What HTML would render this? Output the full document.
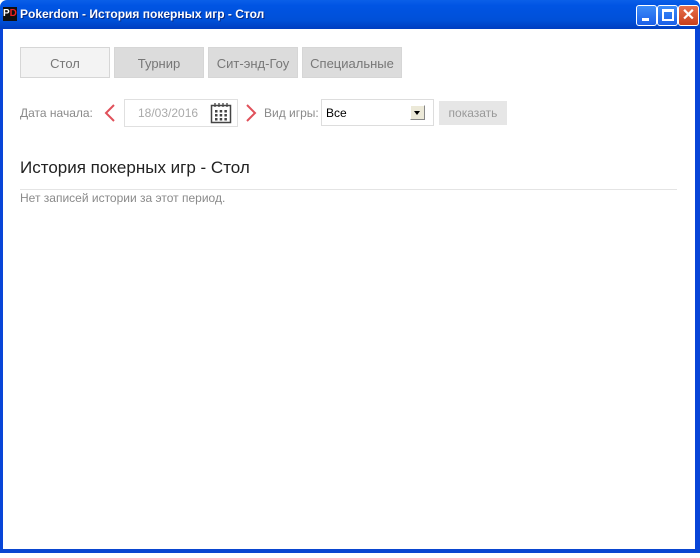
<!DOCTYPE html>
<html><head><meta charset="utf-8"><style>
*{margin:0;padding:0;box-sizing:border-box}
body{width:700px;height:558px;background:#fff;position:relative;overflow:hidden;font-family:"Liberation Sans",sans-serif}
.tb{position:absolute;left:0;top:0;width:700px;height:29px;background:linear-gradient(#0a5fe8,#0054e3 20%,#0050d8 70%,#003ec0);border-radius:7px 7px 0 0}
.tt{position:absolute;left:20px;top:7px;color:#fff;font:bold 12px "Liberation Sans",sans-serif;text-shadow:1px 1px #0a2a80}
.ic{position:absolute;left:3px;top:7px;width:14px;height:14px;background:#111;color:#fff;font:bold 10px sans-serif;line-height:14px}
.ic span{color:#e22}
.wb{position:absolute;top:5px;width:21px;height:21px;border:1px solid #fff;border-radius:3px;background:linear-gradient(#3c8cf8,#1a5ee8)}
.fr{position:absolute;left:0;top:29px;width:3px;height:524px;background:#0845d8}
.fr2{position:absolute;right:0;top:29px;width:5px;height:524px;background:#0845d8}
.fb{position:absolute;left:0;top:549px;width:700px;height:4px;background:#0a46d0}
.btn{position:absolute;top:47px;height:31px;background:#dcdcdc;color:#777;font-size:13px;text-align:center;line-height:31px;border:1px solid #d6d6d6}
.t{position:absolute;color:#8a8a8a;font-size:12px}
</style></head><body>
<div class="tb"></div>
<div class="ic">P<span>D</span></div>
<div class="tt">Pokerdom - История покерных игр - Стол</div>
<div class="wb" style="left:636px"><div style="position:absolute;left:5px;top:12px;width:7px;height:3px;background:#fff"></div></div>
<div class="wb" style="left:657px"><div style="position:absolute;left:4px;top:3px;width:12px;height:12px;border:2px solid #fff;border-top-width:3px"></div></div>
<div class="wb" style="left:678px;background:linear-gradient(#e8704c,#c8401c);color:#fff;font:bold 16px sans-serif;line-height:19px;text-align:center">✕</div>
<div class="fr"></div><div class="fr2"></div><div class="fb"></div>
<div class="btn" style="left:20px;width:90px;background:#f3f3f3">Стол</div>
<div class="btn" style="left:114px;width:90px">Турнир</div>
<div class="btn" style="left:208px;width:90px">Сит-энд-Гоу</div>
<div class="btn" style="left:302px;width:100px">Специальные</div>
<div class="t" style="left:20px;top:106px">Дата начала:</div>
<svg style="position:absolute;left:103px;top:103px" width="14" height="20"><path d="M11 2L3 10L11 18" stroke="#e0505a" stroke-width="2" fill="none"/></svg>
<div style="position:absolute;left:124px;top:99px;width:114px;height:28px;border:1px solid #e0e0e0"></div>
<div class="t" style="left:138px;top:106px;color:#aaa">18/03/2016</div>
<svg style="position:absolute;left:210px;top:102px" width="22" height="22"><rect x="1.5" y="3.5" width="19" height="17" fill="none" stroke="#444" stroke-width="1.5"/><path d="M5 1v4M9 1v4M13 1v4M17 1v4" stroke="#444" stroke-width="1.3"/><g fill="#444"><rect x="5" y="8" width="2.5" height="2.5"/><rect x="9.7" y="8" width="2.5" height="2.5"/><rect x="14.4" y="8" width="2.5" height="2.5"/><rect x="5" y="12" width="2.5" height="2.5"/><rect x="9.7" y="12" width="2.5" height="2.5"/><rect x="14.4" y="12" width="2.5" height="2.5"/><rect x="5" y="16" width="2.5" height="2.5"/><rect x="9.7" y="16" width="2.5" height="2.5"/><rect x="14.4" y="16" width="2.5" height="2.5"/></g></svg>
<svg style="position:absolute;left:244px;top:103px" width="14" height="20"><path d="M3 2L11 10L3 18" stroke="#e0505a" stroke-width="2" fill="none"/></svg>
<div class="t" style="left:264px;top:106px">Вид игры:</div>
<div style="position:absolute;left:321px;top:99px;width:113px;height:27px;border:1px solid #ddd"></div>
<div style="position:absolute;left:326px;top:106px;font-size:12px;color:#000">Все</div>
<div style="position:absolute;left:410px;top:105px;width:15px;height:15px;background:#ece9d8;border:1px solid #aaa;border-color:#fff #888 #888 #fff"><div style="position:absolute;left:3px;top:5px;border:3px solid transparent;border-top:4px solid #000;border-bottom:0"></div></div>
<div style="position:absolute;left:439px;top:101px;width:68px;height:24px;background:#e6e6e6;color:#999;font-size:12px;line-height:24px;text-align:center">показать</div>
<div style="position:absolute;left:20px;top:158px;font-size:17px;color:#222">История покерных игр - Стол</div>
<div style="position:absolute;left:20px;top:189px;width:657px;height:1px;background:#e4e4e4"></div>
<div class="t" style="left:20px;top:191px">Нет записей истории за этот период.</div>
</body></html>
